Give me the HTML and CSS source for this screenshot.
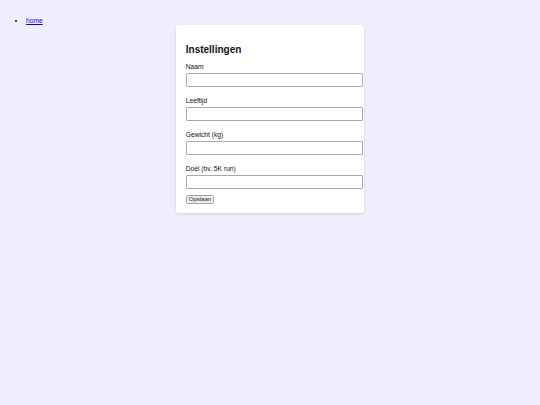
FILE: index.html
```html
<!DOCTYPE html>
<html lang="nl">
<head>
<meta charset="utf-8">
<title>Instellingen</title>
<link rel="stylesheet" href="styles.css">
</head>
<body>
<nav class="nav">
  <ul class="nav-list">
    <li><a href="#">home</a></li>
  </ul>
</nav>
<main class="card">
  <h2 class="title">Instellingen</h2>
  <form class="form">
    <label class="label" for="naam">Naam</label>
    <input class="input" id="naam" type="text">
    <label class="label" for="leeftijd">Leeftijd</label>
    <input class="input" id="leeftijd" type="text">
    <label class="label" for="gewicht">Gewicht (kg)</label>
    <input class="input" id="gewicht" type="text">
    <label class="label" for="doel">Doel (bv. 5K run)</label>
    <input class="input" id="doel" type="text">
    <button class="btn" type="button">Opslaan</button>
  </form>
</main>
</body>
</html>
```
FILE: styles.css
```css
html, body {
  margin: 0;
  padding: 0;
}
body {
  background: #efeefd;
  font-family: "Liberation Sans", Arial, sans-serif;
  color: #111;
  min-height: 405px;
}
.nav-list {
  margin: 16px 0 0;
  padding-left: 26px;
  font-size: 6.7px;
  line-height: 9px;
}
.nav-list a {
  color: #0000ee;
}
.card {
  box-sizing: border-box;
  width: 188.5px;
  margin: 0 auto;
  padding: 10px 10px 9px;
  background: #fff;
  border-radius: 3px;
  box-shadow: 0 1px 3px rgba(0, 0, 0, 0.12);
}
.title {
  font-size: 10px;
  line-height: 12px;
  margin: 8.7px 0 6px;
  font-weight: bold;
}
.form {
  display: flex;
  flex-direction: column;
  align-items: flex-start;
}
.label {
  display: block;
  font-size: 6.7px;
  line-height: 10px;
  margin-bottom: 1px;
}
.input {
  box-sizing: border-box;
  width: 177px;
  height: 14px;
  margin: 0 0 9px;
  padding: 0 3px;
  border: 1px solid #a8a8a8;
  border-radius: 1px;
  font-size: 6.7px;
  background: #fff;
}
.btn {
  margin-top: -3px;
  font-family: "Liberation Sans", Arial, sans-serif;
  font-size: 6px;
  line-height: 7px;
  padding: 0 2px;
  background: #efefef;
  border: 1px solid #a0a0a0;
  border-radius: 1.5px;
  color: #222;
}
```
